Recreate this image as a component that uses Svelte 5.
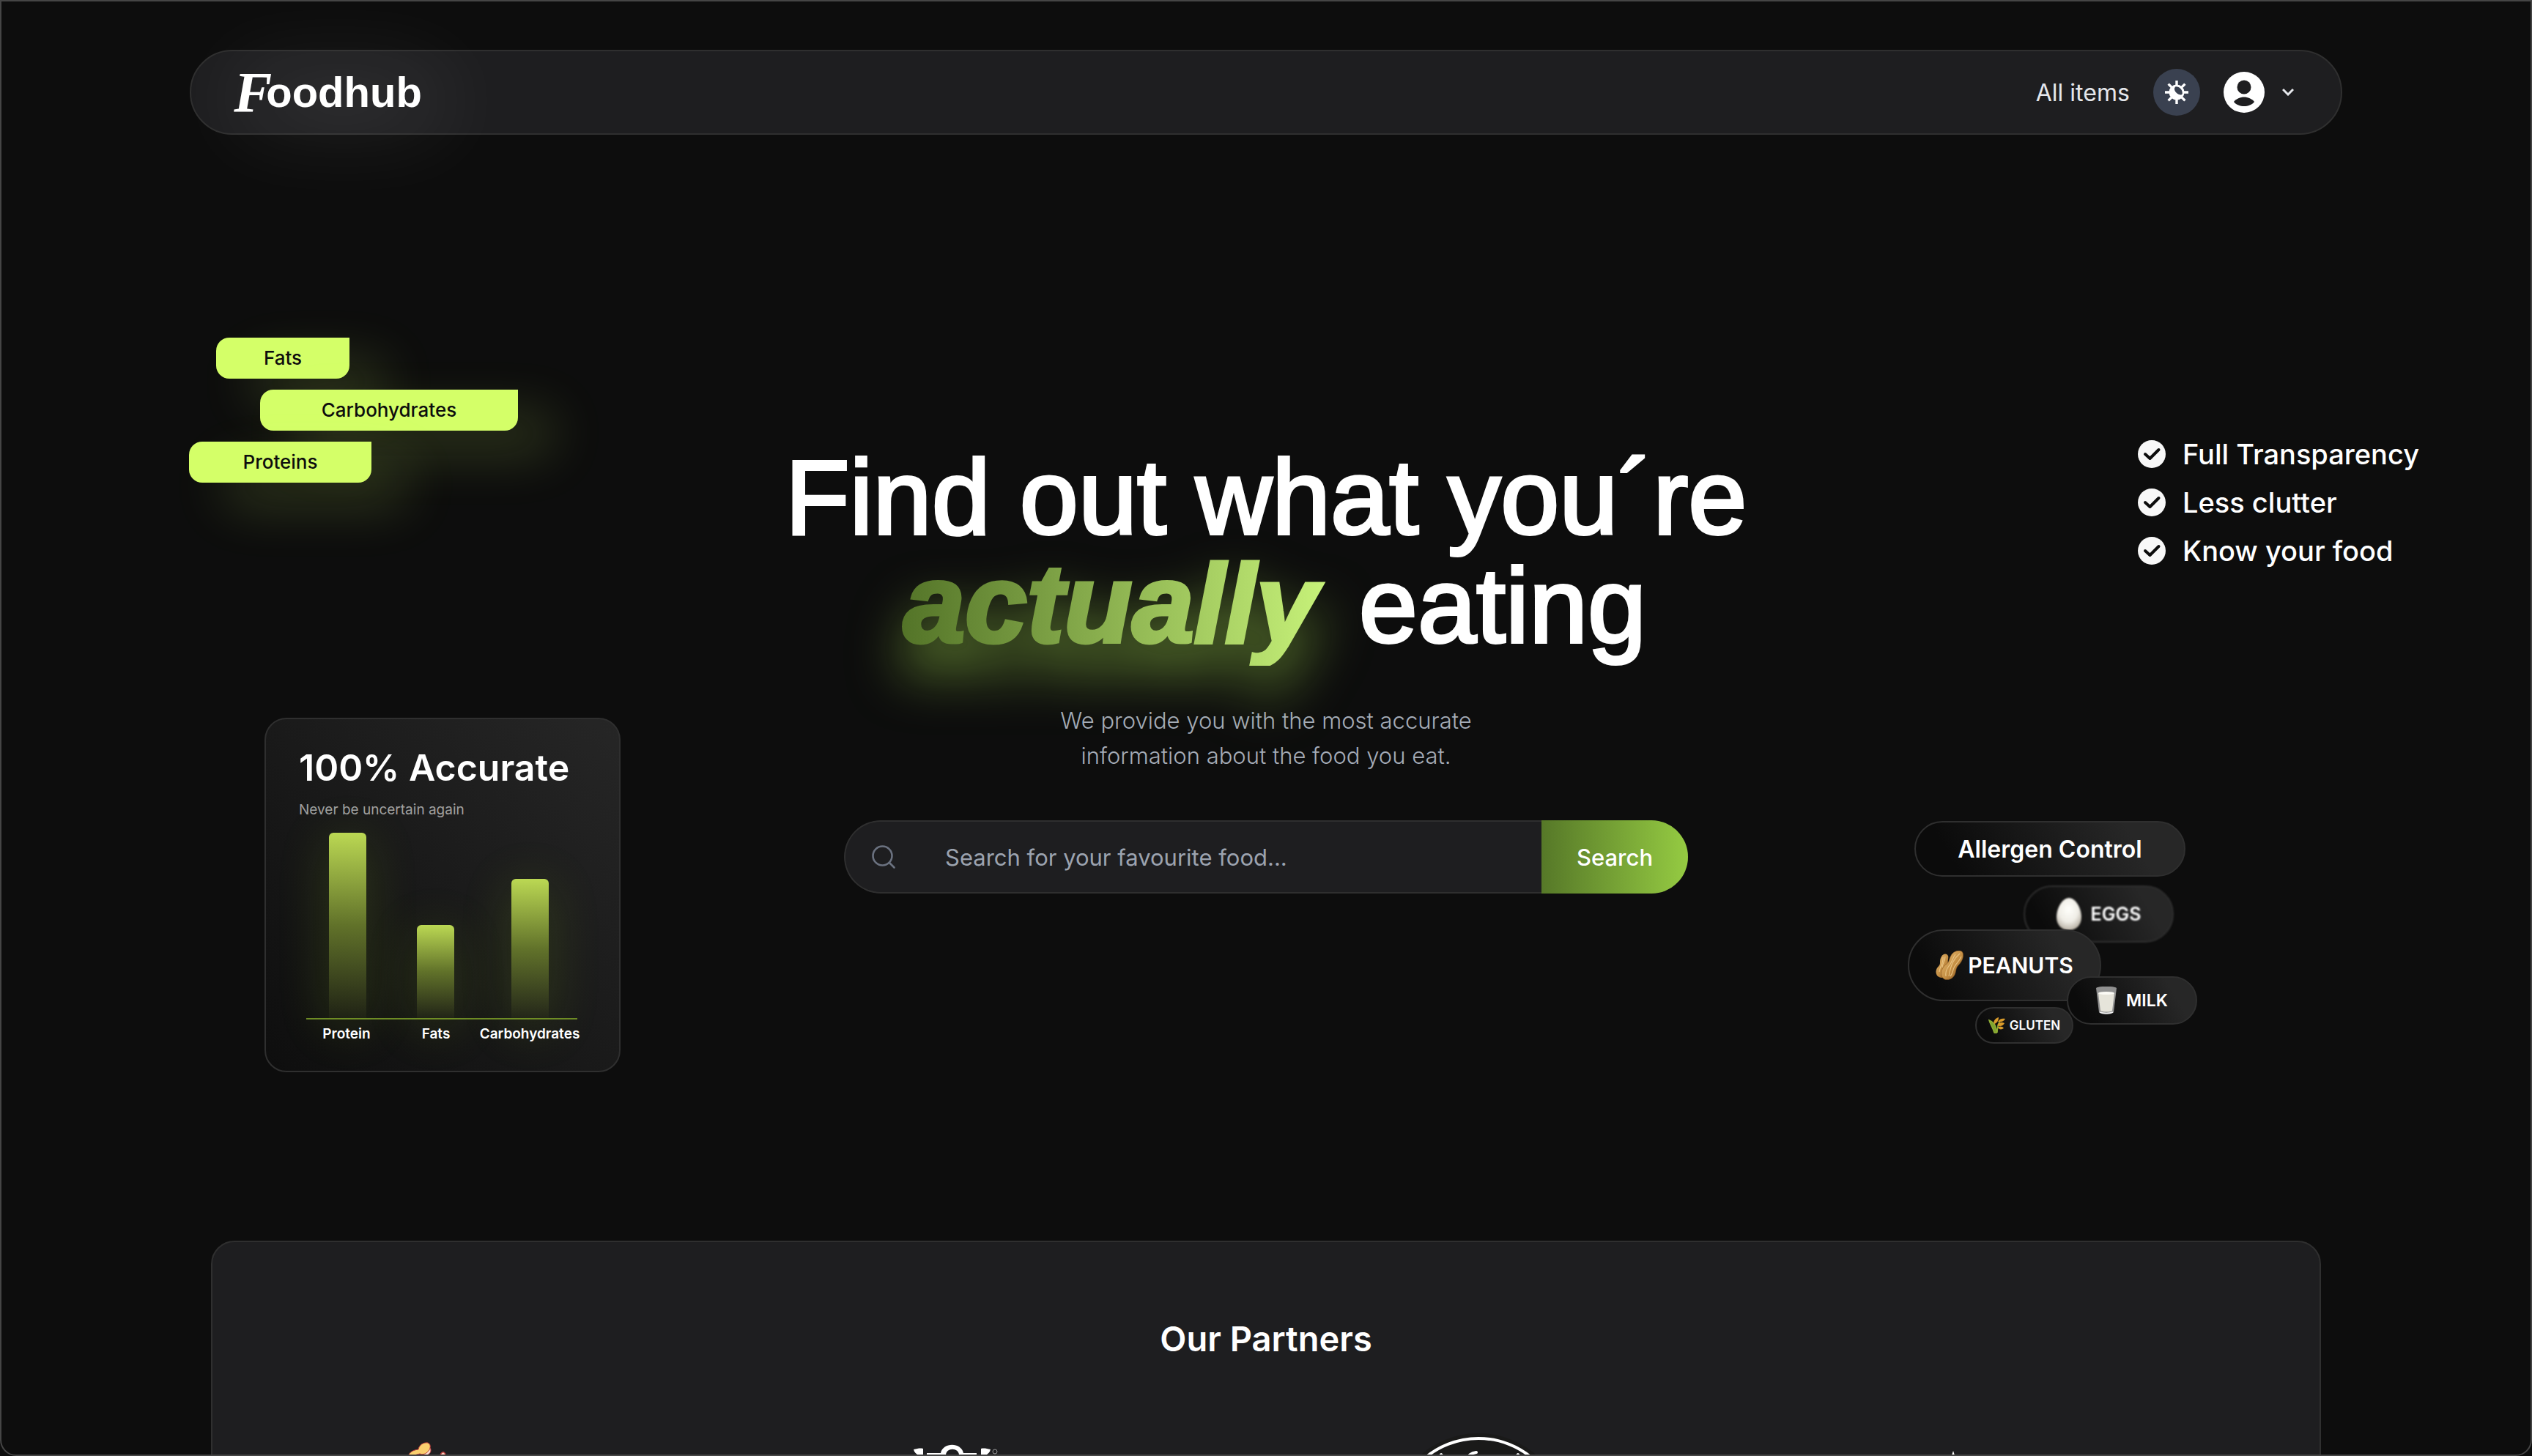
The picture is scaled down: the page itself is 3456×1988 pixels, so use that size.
<script>
  const macros = [
    { name: 'Fats', cls: 'fats' },
    { name: 'Carbohydrates', cls: 'carbs' },
    { name: 'Proteins', cls: 'proteins' }
  ];
  const bars = [
    { name: 'Protein', value: 253 },
    { name: 'Fats', value: 127 },
    { name: 'Carbohydrates', value: 190 }
  ];
  const benefits = ['Full Transparency', 'Less clutter', 'Know your food'];
  let query = $state('');
</script>

<div class="window">
  <nav class="navbar" aria-label="Main">
    <a class="logo" href="/" aria-label="Foodhub"><span class="logo-f">F</span><span class="logo-rest">oodhub</span></a>
    <div class="nav-right">
      <a class="nav-link" href="/items">All items</a>
      <button class="theme" type="button" aria-label="Toggle theme">
        <svg viewBox="0 0 32 32" width="32" height="32" fill="none" stroke="#fff" stroke-width="3.400">
          <path d="M16 0v6M16 26v6M0 16h6M26 16h6M4.600 4.600l4.300 4.300M23.100 23.100l4.300 4.300M27.400 4.600l-4.300 4.300M8.900 23.100l-4.300 4.300" />
          <path fill="#fff" stroke="none" fill-rule="evenodd" d="M16 5.500a10.500 10.500 0 1 0 0 21a10.500 10.500 0 0 0 0-21zM14.500 8.300c4.500-.6 9.500 3.500 9.300 9.200c-.5 2.500-2.500 2.500-5.300 1.300c-4.500-2.200-7.500-7.500-4-10.500z" />
        </svg>
      </button>
      <button class="account" type="button" aria-label="Account menu">
        <svg viewBox="0 0 56 56" width="56" height="56">
          <circle cx="28" cy="28" r="28" fill="#fff" />
          <circle cx="28" cy="21" r="9.500" fill="#1e1e20" />
          <path d="M14 41c3-4 9-6.500 14-6.500s11 2.500 14 6.500c-3 4-9 6-14 6s-11-2-14-6z" fill="#1e1e20" />
        </svg>
        <svg viewBox="0 0 16 10" width="16" height="10" fill="none" stroke="#e5e7eb" stroke-width="3"><path d="M1 1l7 7l7-7" /></svg>
      </button>
    </div>
  </nav>

  <main>
    <section class="hero">
      <div class="side left">
        <ul class="macros">
          {#each macros as m}
            <li class={m.cls}>{m.name}</li>
          {/each}
        </ul>

        <article class="chart-card">
          <h2>100% Accurate</h2>
          <p>Never be uncertain again</p>
          <div class="chart">
            {#each bars as b}
              <div class="bar" style="height: {b.value}px"></div>
            {/each}
          </div>
          <div class="labels">
            {#each bars as b}
              <span>{b.name}</span>
            {/each}
          </div>
        </article>
      </div>

      <div class="center">
        <h1>Find out what you´re<br /><em>actually</em> eating</h1>
        <p class="lead">We provide you with the most accurate<br />information about the food you eat.</p>
        <form class="search" role="search" onsubmit={(e) => e.preventDefault()}>
          <label for="food-search" aria-label="Search for food">
            <svg viewBox="0 0 32 32" width="32" height="32" fill="none" stroke="#6b7280" stroke-width="2.600" stroke-linecap="round">
              <circle cx="14.500" cy="14.500" r="13" /><path d="M24 24l6.500 6.500" />
            </svg>
          </label>
          <input id="food-search" type="text" placeholder="Search for your favourite food..." bind:value={query} />
          <button type="submit">Search</button>
        </form>
      </div>

      <div class="side right">
        <ul class="benefits">
          {#each benefits as b}
            <li>
              <svg viewBox="0 0 38 38" width="38" height="38"><circle cx="19" cy="19" r="19" fill="#f8f8f8" /><path d="M10 19l6.500 6L28.500 13" fill="none" stroke="#0d0d0d" stroke-width="4" stroke-linecap="round" stroke-linejoin="round" /></svg>
              {b}
            </li>
          {/each}
        </ul>

        <div class="allergens">
          <div class="pill control">Allergen Control</div>
          <div class="pill eggs">
            <svg viewBox="0 0 34 44" width="34" height="44">
              <defs><radialGradient id="egg" cx=".48" cy=".35" r=".65"><stop offset="0" stop-color="#fffffb" /><stop offset=".6" stop-color="#efede6" /><stop offset="1" stop-color="#b9b2a6" /></radialGradient></defs>
              <path d="M17 0c9 0 17 14 17 26c0 11-7 18-17 18S0 37 0 26C0 14 8 0 17 0z" fill="url(#egg)" />
            </svg>
            <span>EGGS</span>
          </div>
          <div class="pill peanuts">
            <svg viewBox="0 0 38 40" width="38" height="40">
              <defs><linearGradient id="nut" x1="0" y1="0" x2="1" y2="1"><stop offset="0" stop-color="#e9bd75" /><stop offset=".55" stop-color="#c48e43" /><stop offset="1" stop-color="#7d4a17" /></linearGradient></defs>
              <path d="M8 8c2-4 7-5 9-1c1 3-1 6 0 10c1 5 1 19-7 20c-7 1-11-5-9-11c1-4 5-5 5-9c0-3 0-6 2-9z" fill="url(#nut)" />
              <path d="M22 5c4-5 13-7 15-2c2 6-2 13-6 17c-3 3-3 6-4 10c-2 8-9 11-15 9C6 36 7 27 11 22c3-4 6-4 7-8c1-3 2-6 4-9z" fill="url(#nut)" stroke="#8d5b22" stroke-width=".6" />
              <path d="M33 4c-7 6-12 13-15 31M27 5c-4 5-5 12-9 16c-3 4-5 8-4 14M35 8c-3 8-9 10-11 18c-1 4-2 7-4 9M10 9c1 8-4 12-5 20M13 8c0 6-4 10-4 15" fill="none" stroke="#f3d294" stroke-width="1.200" opacity=".75" />
            </svg>
            <span>PEANUTS</span>
          </div>
          <div class="pill gluten">
            <svg viewBox="0 0 24 22" width="24" height="22">
              <path d="M11 22C11 14 10 8 1 4c2 7 5 10 7 17zM12 21c0-8 1-12 4-16" fill="#7fa32f" stroke="#8fae35" stroke-width="1.500" />
              <path d="M8 9C6 5 10 1 14 0c0 4-2 8-6 9zM13 6c2-4 6-5 10-4c-2 4-6 5-10 4zM12 11c2-4 6-5 10-3c-2 4-6 5-10 3zM13 14c2-2 6-2 8 1c-3 2-6 2-8-1z" fill="#d99b2b" />
            </svg>
            <span>GLUTEN</span>
          </div>
          <div class="pill milk">
            <svg viewBox="0 0 28 38" width="28" height="38">
              <path d="M0 2c4-3 24-3 28 0l-4 33c-3 4-17 4-20 0z" fill="#a6a6a6" opacity=".85" />
              <path d="M3 9c5-2 17-2 22 0l-3 24c-3 2-13 2-16 0z" fill="#e6e4da" />
              <ellipse cx="14" cy="9" rx="11" ry="2" fill="#fbfaf5" />
              <path d="M5 35c5 2 13 2 18 0" fill="none" stroke="#f2f2f2" stroke-width="1.500" />
            </svg>
            <span>MILK</span>
          </div>
        </div>
      </div>
    </section>

    <section class="partners">
      <h2>Our Partners</h2>
      <div class="partner-row">
        <a href="/partners/1" aria-label="Partner one">
          <svg viewBox="0 0 240 240" width="240" height="240">
            <path d="M110 22c3-4 8-4 8 1c0 4-3 6-6 7l3 12h-20l4-11l9-1z" fill="#fbe4d6" stroke="#b83a3a" stroke-width="1" />
            <path d="M99 31l12-2l4 14H96z" fill="#fff" />
            <path d="M131 33c-1-4 2-8 5-7c3 2 2 6 0 9l-6 8h-8z" fill="#f7c9b8" stroke="#b83a3a" stroke-width="1.500" />
            <path d="M87 31c2-5 6-8 14-9c1-6 7-10 13-9c5 2 4 9-1 13c-3 3-7 3-10 2c-4 1-6 1-8 3c-3-1-5 0-8 0z" fill="#f9cf6e" stroke="#b83a3a" stroke-width="1" />
          </svg>
        </a>
        <a href="/partners/2" aria-label="Partner two">
          <svg viewBox="0 0 240 240" width="240" height="240">
            <path d="M63 22c5-1 9-2 13-1v26h-6V30c-4-2-6-4-7-8zM168 22c-5-1-9-2-13-1v26h6V30c4-2 6-4 7-8z" fill="#fff" />
            <path d="M81 27h19c3-15 28-15 31 0h18v20H81z" fill="#fff" />
            <path d="M107 30c0-11 18-11 18 0z" fill="#1e1e20" />
            <circle cx="174" cy="25" r="3" fill="none" stroke="#999" />
          </svg>
        </a>
        <a href="/partners/3" aria-label="Partner three">
          <svg viewBox="0 0 240 240" width="240" height="240">
            <circle cx="120" cy="120" r="120" fill="#1a1a19" />
            <circle cx="120" cy="120" r="113" fill="none" stroke="#fff" stroke-width="4" />
            <path d="M69 29l6 8M117 26c-7 1-11 4-15 12M174 29l-6 8" fill="none" stroke="#fff" stroke-width="4" stroke-linecap="round" />
          </svg>
        </a>
        <a href="/partners/4" aria-label="Partner four">
          <svg viewBox="0 0 240 240" width="240" height="240">
            <path d="M54 24l6 18l18 8l-18 8l-6 18l-6-18l-18-8l18-8z" fill="#fff" />
          </svg>
        </a>
      </div>
    </section>
  </main>
</div>

<style>
  :global(body) {
    margin: 0;
    background: #0d0d0d;
  }
  .window {
    position: relative;
    box-sizing: border-box;
    height: 100vh;
    overflow: hidden;
    padding-top: 68px;
    background: #0d0d0d;
    color: #fff;
    font-family: Inter, 'Liberation Sans', sans-serif;
    font-size: 32px;
  }
  .window::after {
    content: '';
    position: absolute;
    inset: 0;
    border: 2px solid #454545;
    border-radius: 0 0 22px 22px;
    pointer-events: none;
  }
  a {
    color: inherit;
    text-decoration: none;
  }
  h1,
  h2,
  p,
  ul {
    margin: 0;
    padding: 0;
  }
  button {
    font: inherit;
    color: inherit;
    border: 0;
    background: none;
    padding: 0;
    cursor: pointer;
  }
  svg {
    display: block;
    flex: none;
  }
  .navbar {
    box-sizing: border-box;
    width: 85%;
    height: 116px;
    margin: 0 auto;
    padding: 0 64px 0 58px;
    display: flex;
    align-items: center;
    justify-content: space-between;
    background: #1e1e20;
    border: 2px solid #2f2f2f;
    border-radius: 58px;
  }
  .logo {
    display: flex;
    align-items: center;
    line-height: 80px;
    filter: drop-shadow(20px 8px 60px rgba(255, 255, 255, 0.45));
  }
  .logo-f {
    font: italic bold 78px/80px 'Liberation Serif', serif;
  }
  .logo-rest {
    font: bold 58px/80px 'Liberation Sans', sans-serif;
    margin-left: -8px;
  }
  .nav-right {
    display: flex;
    align-items: center;
    gap: 32px;
  }
  .nav-link {
    color: #e5e7eb;
  }
  .theme {
    display: grid;
    place-items: center;
    width: 64px;
    height: 64px;
    border-radius: 50%;
    background: #3a4150;
  }
  .account {
    display: flex;
    align-items: center;
    gap: 24px;
  }
  .hero {
    display: grid;
    grid-template-columns: 1fr 1320px 1fr;
    height: 1510px;
  }
  .side {
    display: flex;
    flex-direction: column;
    align-items: flex-start;
  }
  .left {
    padding: 277px 0 0 258px;
  }
  .macros {
    list-style: none;
    display: flex;
    flex-direction: column;
    align-items: flex-start;
    gap: 15px;
  }
  .macros li {
    box-sizing: border-box;
    height: 56px;
    line-height: 56px;
    text-align: center;
    font-size: 26px;
    font-weight: 500;
    color: #0d0d0d;
    background: #d4ff68;
    border-radius: 18px 0 18px 18px;
    box-shadow: 48px 32px 72px rgba(212, 255, 104, 0.18);
  }
  .macros .fats {
    width: 182px;
    margin-left: 37px;
  }
  .macros .carbs {
    width: 352px;
    margin-left: 97px;
  }
  .macros .proteins {
    width: 249px;
  }
  .chart-card {
    box-sizing: border-box;
    width: 486px;
    margin: 321px 0 0 103px;
    padding: 32px 45px;
    border: 2px solid #2f2f2f;
    border-radius: 30px;
    background: linear-gradient(45deg, #0e0e0e, #1a1a1a 50%, #262626);
  }
  .chart-card h2 {
    font-size: 50px;
    line-height: 68px;
    font-weight: 600;
    white-space: nowrap;
  }
  .chart-card p {
    margin-top: 8px;
    font-size: 19px;
    line-height: 32px;
    color: #a0a0a0;
  }
  .chart {
    display: grid;
    grid-template-columns: 120px 129px 51px;
    align-items: end;
    height: 268px;
    margin: 0 12px 0 10px;
    padding-left: 31px;
    border-bottom: 2px solid #6d8a26;
  }
  .bar {
    width: 51px;
    border-radius: 6px 6px 0 0;
    background: linear-gradient(#bbd853, rgba(110, 130, 45, 0.85) 50%, rgba(60, 70, 25, 0.3));
    box-shadow: 0 10px 70px rgba(150, 200, 30, 0.2);
  }
  .labels {
    display: grid;
    grid-template-columns: 130px 114px 142px;
    justify-items: center;
    font-size: 19px;
    line-height: 36px;
    font-weight: 600;
    margin: 2px 0 0;
  }
  .center {
    display: flex;
    flex-direction: column;
    align-items: center;
    padding-top: 424px;
  }
  h1 {
    font-family: 'Liberation Sans', sans-serif;
    font-size: 144px;
    line-height: 144px;
    font-weight: 400;
    text-align: center;
    white-space: nowrap;
    -webkit-text-stroke: 4px #fff;
  }
  h1 em {
    font-size: 152px;
    font-weight: 700;
    padding: 0 16px 0 24px;
    color: transparent;
    -webkit-text-stroke: 5px transparent;
    background: linear-gradient(90deg, #4f6f25, #c8f37a);
    background-clip: text;
    filter: drop-shadow(0 40px 36px rgba(160, 215, 75, 0.6));
  }
  .lead {
    margin-top: 60px;
    text-align: center;
    font-size: 31px;
    line-height: 48px;
    font-weight: 300;
    color: #a5acb8;
  }
  .search {
    box-sizing: border-box;
    width: 1152px;
    height: 100px;
    margin-top: 64px;
    display: flex;
    align-items: stretch;
    overflow: hidden;
    border-radius: 50px;
    background: #1e1e20;
  }
  .search label {
    display: flex;
    align-items: center;
    padding: 0 68px 0 36px;
    border: 2px solid #2f2f2f;
    border-right: 0;
    border-radius: 50px 0 0 50px;
  }
  .search input {
    flex: 1;
    min-width: 0;
    padding: 0;
    font: inherit;
    font-size: 31px;
    color: #fff;
    background: none;
    border: 2px solid #2f2f2f;
    border-width: 2px 0;
    outline: 0;
  }
  .search input::placeholder {
    color: #9ca3af;
    opacity: 1;
  }
  .search button {
    width: 200px;
    font-size: 31px;
    font-weight: 500;
    background: linear-gradient(90deg, #567828, #95cb42);
  }
  .right {
    padding-top: 403px;
  }
  .benefits {
    list-style: none;
    margin-left: 530px;
    font-size: 38px;
    font-weight: 500;
  }
  .benefits li {
    display: flex;
    align-items: center;
    gap: 23px;
    height: 66px;
    white-space: nowrap;
  }
  .allergens {
    position: relative;
    width: 395px;
    height: 305px;
    margin: 336px 0 0 216px;
    font-weight: 600;
  }
  .pill {
    position: absolute;
    box-sizing: border-box;
    display: flex;
    align-items: center;
    justify-content: center;
    border: 2px solid #2f2f2f;
    border-radius: 50px;
    background: linear-gradient(60deg, #0b0b0b 15%, #272727 80%);
    white-space: nowrap;
  }
  .control {
    left: 9px;
    top: 0;
    width: 370px;
    height: 76px;
    font-size: 32px;
  }
  .eggs {
    left: 158px;
    top: 88px;
    width: 205px;
    height: 78px;
    gap: 13px;
    font-size: 25px;
    filter: blur(1px);
  }
  .peanuts {
    left: 0;
    top: 148px;
    width: 264px;
    height: 98px;
    gap: 6px;
    font-size: 30px;
  }
  .gluten {
    left: 92px;
    top: 254px;
    width: 134px;
    height: 50px;
    gap: 5px;
    font-size: 17px;
  }
  .milk {
    left: 217px;
    top: 212px;
    width: 178px;
    height: 66px;
    gap: 13px;
    font-size: 23px;
  }
  .partners {
    box-sizing: border-box;
    width: calc(100% - 576px);
    margin: 0 auto;
    padding: 100px 0;
    background: #1e1e20;
    border: 2px solid #2f2f2f;
    border-radius: 32px;
  }
  .partners h2 {
    font-size: 47px;
    line-height: 64px;
    font-weight: 600;
    text-align: center;
  }
  .partner-row {
    display: flex;
    gap: 474px;
    padding-left: 180px;
    margin-top: 97px;
  }
</style>
